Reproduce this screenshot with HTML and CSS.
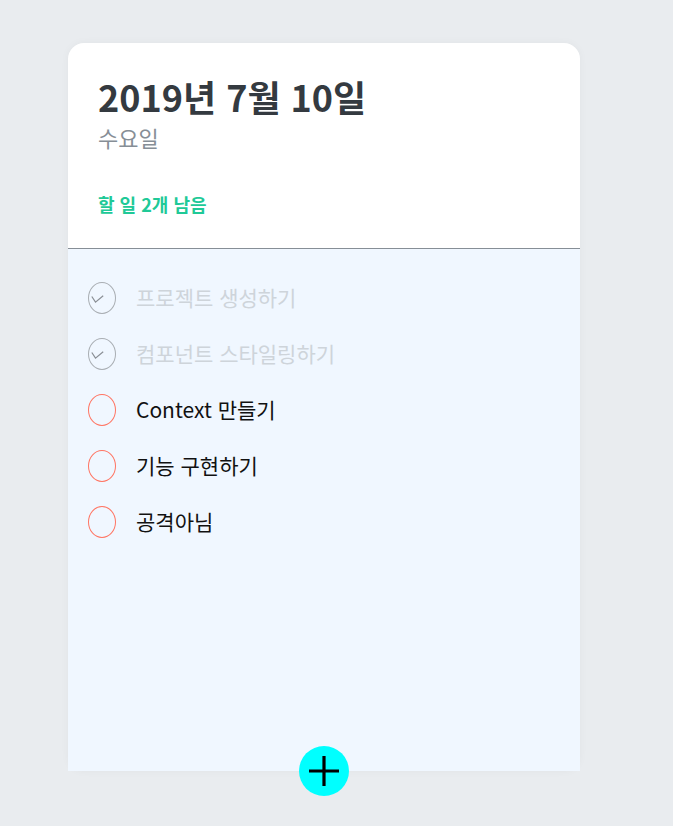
FILE: index.html
```html
<!DOCTYPE html>
<html lang="ko">
<head>
  <meta charset="UTF-8" />
  <meta name="viewport" content="width=device-width, initial-scale=1.0"/>
  <title>Todo</title>
  <link rel="stylesheet" href="styles.css">
</head>
<body>
  <div class="todo-template">
    <div class="todo-head">
      <h1>2019년 7월 10일</h1>
      <div class="day">수요일</div>
      <div class="tasks-left">할 일 2개 남음</div>
    </div>

    <div class="todo-list">
      <div class="todo-item done">
        <div class="check-circle">
          <svg class="check" width="13" height="9" viewBox="0 0 13 9"><path d="M0.8 1.5 L4.5 7.2 L12.2 0.8" fill="none" stroke="#8a8f95" stroke-width="1.2"/></svg>
        </div>
        <div class="text">프로젝트 생성하기</div>
      </div>
      <div class="todo-item done">
        <div class="check-circle">
          <svg class="check" width="13" height="9" viewBox="0 0 13 9"><path d="M0.8 1.5 L4.5 7.2 L12.2 0.8" fill="none" stroke="#8a8f95" stroke-width="1.2"/></svg>
        </div>
        <div class="text">컴포넌트 스타일링하기</div>
      </div>
      <div class="todo-item">
        <div class="check-circle"></div>
        <div class="text">Context 만들기</div>
      </div>
      <div class="todo-item">
        <div class="check-circle"></div>
        <div class="text">기능 구현하기</div>
      </div>
      <div class="todo-item">
        <div class="check-circle"></div>
        <div class="text">공격아님</div>
      </div>
    </div>

    <button class="add-btn" aria-label="add">
      <svg width="30" height="30" viewBox="0 0 30 30"><path d="M15 0 V30 M0 15 H30" stroke="#000" stroke-width="3.2"/></svg>
    </button>
  </div>
</body>
</html>
```

FILE: styles.css
```css
html, body {
  margin: 0;
  padding: 0;
  background: #e9ecef;
  font-family: "Noto Sans CJK KR", "Noto Sans", sans-serif;
}
body {
  min-height: 826px;
}
.todo-template {
  position: relative;
  width: 512px;
  height: 728px;
  margin: 43px 0 0 68px;
  background: #fff;
  border-radius: 16px;
  box-shadow: 0 0 8px rgba(0,0,0,0.04);
  display: flex;
  flex-direction: column;
}
.todo-head {
  padding: 32px 32px 30px 30px;
  border-bottom: 1px solid #868e96;
}
.todo-head h1 {
  margin: 0;
  font-size: 36px;
  line-height: 1.2;
  font-weight: bold;
  color: #343a40;
}
.day {
  margin-top: 4px;
  font-size: 22px;
  line-height: 1.45;
  color: #868e96;
}
.tasks-left {
  margin-top: 37px;
  font-size: 18px;
  line-height: 1.5;
  font-weight: bold;
  color: #20c997;
}
.todo-list {
  flex: 1;
  background: #f0f7ff;
  padding: 21px 20px 48px 20px;
}
.todo-item {
  display: flex;
  align-items: center;
  padding: 12px 0;
}
.check-circle {
  position: relative;
  flex-shrink: 0;
  width: 28px;
  height: 32px;
  border-radius: 50%;
  border: 1px solid #ff7563;
  box-sizing: border-box;
  margin-right: 20px;
}
.done .check-circle {
  border-color: #a9aeb3;
}
.check {
  position: absolute;
  left: 2px;
  top: 12px;
}
.text {
  font-size: 21px;
  line-height: 1.5;
  color: #111;
}
.done .text {
  color: #ced4da;
}
.add-btn {
  position: absolute;
  left: 50%;
  bottom: 0;
  transform: translate(-50%, 50%);
  width: 50px;
  height: 50px;
  border: none;
  border-radius: 50%;
  background: #00ffff;
  padding: 0;
  display: flex;
  align-items: center;
  justify-content: center;
  cursor: pointer;
}
```
